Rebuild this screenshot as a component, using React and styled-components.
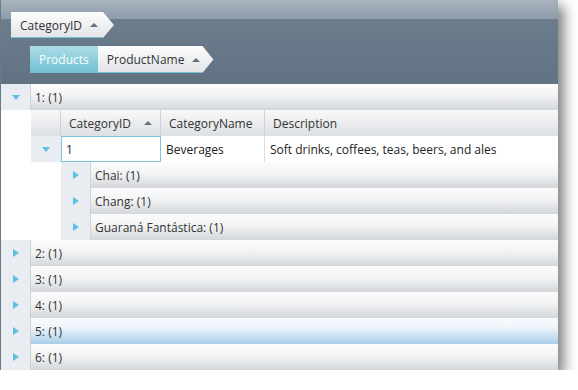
import React from "react";
import styled, { createGlobalStyle } from "styled-components";

const products = ["Chai: (1)", "Chang: (1)", "Guaraná Fantástica: (1)"];
const groups = ["2: (1)", "3: (1)", "4: (1)", "5: (1)", "6: (1)"];

const App = () => {
  return (
    <>
      <GlobalStyle />
      <Grid>
        <GroupPanel>
          <ChipRow>
            <Chip>
              CategoryID
              <SortArrow />
            </Chip>
          </ChipRow>
          <ChipRow $indent>
            <TabChip>Products</TabChip>
            <Chip $wide>
              ProductName
              <SortArrow />
            </Chip>
          </ChipRow>
        </GroupPanel>

        <GroupRow>
          <Expander>
            <Arrow $open />
          </Expander>
          <RowLabel>1: (1)</RowLabel>
        </GroupRow>

        <Nested>
          <HeaderRow>
            <HeaderIndent />
            <HeaderCell $w={100}>
              CategoryID
              <SortArrow />
            </HeaderCell>
            <HeaderCell $w={104}>CategoryName</HeaderCell>
            <HeaderCell $last>Description</HeaderCell>
          </HeaderRow>
          <DataRow>
            <DataIndent>
              <Arrow $open />
            </DataIndent>
            <DataCell $w={100} $selected>
              1
            </DataCell>
            <DataCell $w={104}>Beverages</DataCell>
            <DataCell $last>Soft drinks, coffees, teas, beers, and ales</DataCell>
          </DataRow>
          <Detail>
            {products.map((p) => (
              <GroupRow key={p}>
                <Expander>
                  <Arrow />
                </Expander>
                <RowLabel>{p}</RowLabel>
              </GroupRow>
            ))}
          </Detail>
        </Nested>

        {groups.map((g) => (
          <GroupRow key={g}>
            <Expander>
              <Arrow />
            </Expander>
            <RowLabel $hot={g.startsWith("5")}>{g}</RowLabel>
          </GroupRow>
        ))}
      </Grid>
    </>
  );
};

const GlobalStyle = createGlobalStyle`
  body {
    margin: 0;
    background: #fff;
    font-family: "Open Sans", "Segoe UI", sans-serif;
    font-size: 12px;
    color: #333;
  }
`;

const Grid = styled.div`
  width: 558px;
  box-sizing: border-box;
  border-left: 1px solid #6a7a89;
  background: #fff;
  box-shadow: 6px 6px 12px rgba(0, 0, 0, 0.5);
`;

const GroupPanel = styled.div`
  height: 84px;
  box-sizing: border-box;
  padding: 12px 0 0 10px;
  display: flex;
  flex-direction: column;
  gap: 8px;
  background: linear-gradient(
    to bottom,
    #a8b3bf 0,
    #8e9ba8 19px,
    #6c7d8c 19px,
    #617283 100%
  );
`;

const ChipRow = styled.div`
  display: flex;
  margin-left: ${(p) => (p.$indent ? "19px" : "0")};
  height: ${(p) => (p.$indent ? "27px" : "26px")};
`;

const Chip = styled.div`
  display: flex;
  align-items: center;
  box-sizing: border-box;
  height: 100%;
  padding: 0 ${(p) => (p.$wide ? "13px" : "16px")} 0 9px;
  color: #333;
  background: linear-gradient(to bottom, #fdfdfd, #e1e3e6);
  box-shadow: inset 0 -1px 0 #74c3d7;
  clip-path: polygon(
    0 0,
    calc(100% - 11px) 0,
    100% 50%,
    calc(100% - 11px) 100%,
    0 100%
  );
`;

const TabChip = styled.div`
  display: flex;
  align-items: center;
  padding: 0 9px;
  color: #fff;
  background: linear-gradient(to bottom, #abdde7, #70bfd1);
`;

const SortArrow = styled.span`
  display: inline-block;
  width: 0;
  height: 0;
  margin-left: 8px;
  border-left: 4px solid transparent;
  border-right: 4px solid transparent;
  border-bottom: 4px solid #66717c;
`;

const GroupRow = styled.div`
  display: flex;
  height: 26px;
`;

const Expander = styled.div`
  width: 30px;
  box-sizing: border-box;
  border-right: 1px solid #cdd2d7;
  background: #e9edf1;
  display: flex;
  align-items: center;
  justify-content: center;
`;

const Arrow = styled.span`
  width: 0;
  height: 0;
  ${(p) =>
    p.$open
      ? `
    border-left: 4.5px solid transparent;
    border-right: 4.5px solid transparent;
    border-top: 5px solid #5bc0e3;
  `
      : `
    border-top: 4px solid transparent;
    border-bottom: 4px solid transparent;
    border-left: 6px solid #5bc0e3;
    margin-left: 1px;
  `}
`;

const RowLabel = styled.div`
  flex: 1;
  display: flex;
  align-items: center;
  padding-left: 4px;
  color: #333;
  background: ${(p) =>
    p.$hot
      ? "linear-gradient(to bottom, #f8fbfe 0, #eef5fb 35%, #aacde8 100%)"
      : "linear-gradient(to bottom, #fcfcfc 0, #f2f3f4 45%, #d3d7db 100%)"};
`;

const Nested = styled.div`
  padding-left: 30px;
  background: #fff;
`;

const HeaderRow = styled.div`
  display: flex;
  height: 26px;
  background: linear-gradient(to bottom, #f9f9fa, #dcdfe3);
`;

const HeaderIndent = styled.div`
  width: 30px;
  box-sizing: border-box;
  border-right: 1px solid #cfd3d7;
`;

const HeaderCell = styled.div`
  display: flex;
  align-items: center;
  box-sizing: border-box;
  padding-left: 8px;
  color: #333;
  ${(p) => (p.$last ? "flex: 1;" : `width: ${p.$w}px;`)}
  border-right: ${(p) => (p.$last ? "none" : "1px solid #cfd3d7")};

  & > span {
    margin-left: auto;
    margin-right: 8px;
  }
`;

const DataRow = styled.div`
  display: flex;
  height: 26px;
  background: #fff;
`;

const DataIndent = styled.div`
  width: 30px;
  background: #e9edf1;
  display: flex;
  align-items: center;
  justify-content: center;
`;

const DataCell = styled.div`
  display: flex;
  align-items: center;
  box-sizing: border-box;
  padding-left: 5px;
  color: #222;
  ${(p) => (p.$last ? "flex: 1;" : `width: ${p.$w}px;`)}
  ${(p) =>
    p.$selected
      ? "border: 1px solid #7cc6d9; padding-left: 4px;"
      : p.$last
      ? ""
      : "border-right: 1px solid #dadcde;"}
`;

const Detail = styled.div`
  padding-left: 30px;
`;

export default App;
